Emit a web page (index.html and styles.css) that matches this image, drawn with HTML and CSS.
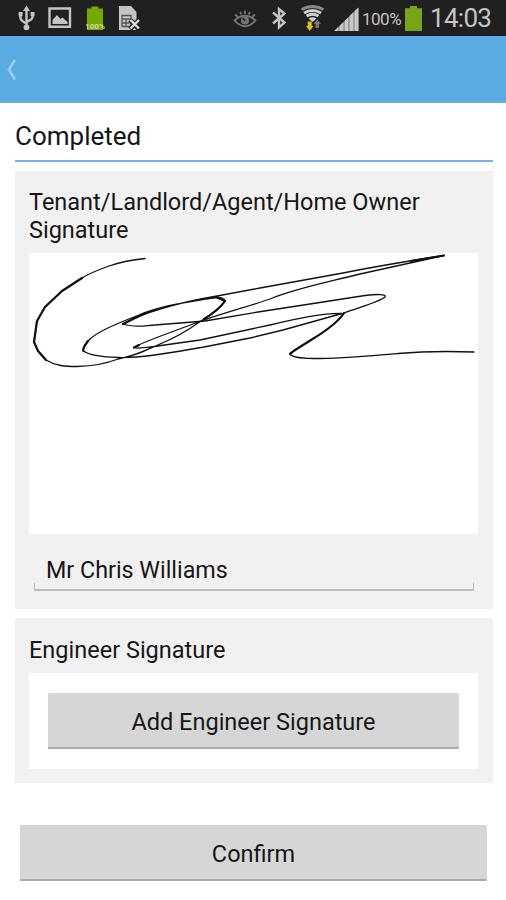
FILE: index.html
```html
<!DOCTYPE html>
<html lang="en">
<head>
<meta charset="utf-8">
<title>Completed</title>
<link rel="stylesheet" href="styles.css">
</head>
<body>
<header class="status">
  <div class="status-left">
    <svg width="18" height="36" viewBox="18 0 18 36" fill="none" stroke="#c4c4c4" stroke-width="2.400"><path d="M26.500 9V27M20.500 14V18Q20.500 20.500 26.500 23.500M32.500 14V17Q32.500 19.500 26.500 22"/><path d="M26.500 5.500L30 11H23ZM18.600 12h4v4.200h-4ZM30.600 12h4v4.200h-4Z" fill="#c4c4c4" stroke="none"/><circle cx="26.500" cy="27.300" r="2.900" fill="#c4c4c4" stroke="none"/></svg>
    <svg width="24" height="36" viewBox="48 0 24 36"><path d="M49.500 8.500H70V26.800H49.500Z" fill="none" stroke="#c4c4c4" stroke-width="2.400"/><path d="M52.500 24V20L57 15L60.500 19L62.500 17.500L67.500 22V24Z" fill="#c4c4c4"/></svg>
    <svg width="22" height="36" viewBox="83 0 22 36"><path d="M86 8.500H90.500V6.500H97.500V8.500H102V30H86Z" fill="#76a800"/><text class="tiny" x="84" y="28.500" textLength="20" lengthAdjust="spacingAndGlyphs">100%</text></svg>
    <svg width="23" height="36" viewBox="117 0 23 36"><path d="M118 6H130L135.500 12V30H118Z" fill="#c4c4c4"/><path d="M121 15.500H130V26.500H121ZM121 19H130M121 23H128M125 19V26.500" fill="none" stroke="#555" stroke-width="1.300"/><path d="M129 20L138 29M138 20L129 29" stroke="#252525" stroke-width="5"/><path d="M129.500 20L138 28.500M138 20L129.500 28.500" stroke="#ddd" stroke-width="2.400"/></svg>
  </div>
  <div class="status-right">
    <svg class="eye" width="24" height="36" viewBox="233 0 24 36" fill="none" stroke="#757575" stroke-width="1.800"><path d="M234.500 20.500Q245 11 255.500 20.500Q245 32 234.500 20.500ZM235 14.500L238 17M240 12L241.500 14.500M245 10.500V14M250 12L248.500 14.500M255 14.500L252 17"/><circle cx="245" cy="20.500" r="4" fill="#757575" stroke="none"/><path d="M243 18l2 3" stroke="#222" stroke-width="1.500"/></svg>
    <svg class="bt" width="17" height="36" viewBox="271 0 17 36" fill="none" stroke="#c4c4c4" stroke-width="2.400"><path d="M273 12.500L284.500 22.500L279 27.300V9L284.500 13.500L273 23.500"/></svg>
    <svg class="wifi" width="25" height="36" viewBox="300 0 25 36" fill="none"><path d="M301.500 9.500Q312.500 3.500 323.500 9.500" stroke="#8a8a8a" stroke-width="2.800"/><path d="M304 13Q312.500 8 321 13" stroke="#d0d0d0" stroke-width="3"/><path d="M306.500 16Q312.500 12.500 318.500 16" stroke="#d0d0d0" stroke-width="2.800"/><path d="M308.500 18.500Q312.500 16 316.500 18.500L312.500 22Z" fill="#d0d0d0"/><path d="M307.700 21.500H311.700V26H313.500L309.700 31L306 26H307.700Z" fill="#e3bd16"/><path d="M315.500 28V24H313.500L317.200 19.500L321 24H319V28Z" fill="#777"/></svg>
    <svg class="signal" width="26" height="36" viewBox="334 0 26 36"><path d="M334.500 31L358.500 7.500V31Z" fill="#777"/><path d="M334.500 31V30.500L338.500 26.700V31ZM339.500 31V25.800L343.500 22V31ZM344.500 31V21L348.500 17V31ZM349.500 31V16L353.500 12V31ZM354.500 31V11L358.500 7.500V31Z" fill="#c8c8c8"/></svg>
    <span class="percent">100%</span>
    <svg class="batt" width="18" height="36" viewBox="405 0 18 36"><path d="M405 8.300H410V6H417V8.300H422V31H405Z" fill="#76a51b"/></svg>
    <span class="clock">14:03</span>
  </div>
</header>
<nav class="bar">
  <svg width="12" height="24" viewBox="6 58 12 24" fill="none" stroke="#9dcdf0" stroke-width="2.600"><path d="M15 60L8.800 69.500L15 79.500"/></svg>
</nav>
<main>
  <h1>Completed</h1>
  <section class="panel">
    <h2>Tenant/Landlord/Agent/Home Owner Signature</h2>
    <svg class="pad" width="449" height="281" viewBox="29 253 449 281" fill="none" stroke="#111" stroke-width="1.300" stroke-linejoin="round" stroke-linecap="round">
      <path d="M145 258.500C130 260 118 263 109 266C98 270 88 274 82 278L62 291L45 307L37 321L34 342L38 351L46 360C56 366 65 366.500 77 366.500C93 366 108 363 118 359C135 356 144 351 160 344C175 338 187 331 201 321C211 315 219 309 225 301C225 299 221 297 217 297.500C190 301 158 307 139 315C116 324 96 332 88 341C84 346 82 350 83.500 351C90 356 103 357 119 357.500C145 358 174 352 204 347L250 338L283 330L342 313.500C323 313 300 318 270 325L200 340L154 346.500C146 347.500 137 349 134 347.500C140 343 164 335 193 324C219 314 247 307 270 299C294 289 320 284 360 274L444 255.500C415 260 373 267 343 273L260 288L217 296C188 301 150 309 123 324"/>
      <path d="M123 324C135 328 145 325.500 155 325L205 321L258 312L310 304L365 295.500C377 294 387 294 385 297C379 302 360 307 344 313C338 322 326 331 311 340C300 347 291 352 290 354C292 358 304 358.500 320 358.500C346 358 369 356 398 353.500C426 351 446 351 474 352"/>
      <path d="M82 278L62 291L45 307L37 321L34 342L38 351L46 360M88 341Q82 349 83.500 351M123 324L143 314M225 301Q219 310 204 319M344 313C338 322 326 331 311 340C300 347 291 352 290 354M411 261L444 255.500M217 297.500L225 301M134 347.500L139 345" stroke-width="2.200"/>
    </svg>
    <div class="field">Mr Chris Williams</div>
  </section>
  <section class="panel engineer">
    <h2>Engineer Signature</h2>
    <div class="box"><button>Add Engineer Signature</button></div>
  </section>
  <button class="confirm">Confirm</button>
</main>
</body>
</html>
```
FILE: styles.css
```css
* { box-sizing: border-box; }
body { margin: 0; background: #fff; color: #161616; font-family: Roboto, sans-serif; }
svg { display: block; flex: none; }
.status { height: 36px; background: #202020; border-bottom: 1px solid #0c1319; display: flex; justify-content: space-between; overflow: hidden; }
.status-left { display: flex; gap: 12px; padding-left: 18px; }
.status-right { display: flex; align-items: flex-start; padding-right: 14px; }
.tiny { font-size: 8px; font-weight: 700; fill: #ccd8aa; }
.eye { margin-right: 14px; }
.bt { margin-right: 12px; }
.wifi { margin-right: 9px; }
.signal { margin-right: 2px; }
.percent { width: 43px; font-size: 17px; line-height: 38px; color: #c4c4c4; letter-spacing: -0.5px; white-space: nowrap; }
.batt { margin-right: 7px; }
.clock { width: 62px; font-size: 26px; line-height: 36px; color: #c4c4c4; letter-spacing: -0.7px; white-space: nowrap; }
.bar { height: 67px; background: #5aabe2; border-bottom: 2px solid #62b0e4; padding: 22px 0 0 6px; }
main { padding: 0 13px 0 15px; }
h1 { margin: 0 0 9px; height: 59px; padding-top: 17px; border-bottom: 2px solid #78aeea; font-size: 26px; line-height: 32px; font-weight: 400; }
h2 { margin: 0; font-size: 23.5px; line-height: 27.5px; font-weight: 400; }
.panel { height: 438px; background: #f1f1f1; padding: 18px 14px 0; }
.panel h2 { letter-spacing: 0; }
.pad { background: #fff; margin-top: 9px; }
.field { height: 37px; margin: 20px 5px 0; padding: 1px 12px 0; font-size: 23.3px; line-height: 31px; background: linear-gradient(#b5b5b5, #b5b5b5) left bottom / 1px 6px no-repeat, linear-gradient(#b5b5b5, #b5b5b5) right bottom / 1px 6px no-repeat; border-bottom: 2px solid #bdbdbd; }
.engineer { height: 165px; margin-top: 9px; padding-top: 19px; }
.box { width: 449px; height: 96px; margin-top: 8.5px; padding: 20px 19px; background: #fff; }
button { display: block; width: 100%; height: 56px; margin: 0; padding: 3px 0 0; border: 0; border-bottom: 2px solid #acacac; border-radius: 1px; background: #d6d6d6; color: #161616; font-family: inherit; font-size: 23.5px; }
.confirm { width: 467px; margin: 42px 0 0 5px; }
```
